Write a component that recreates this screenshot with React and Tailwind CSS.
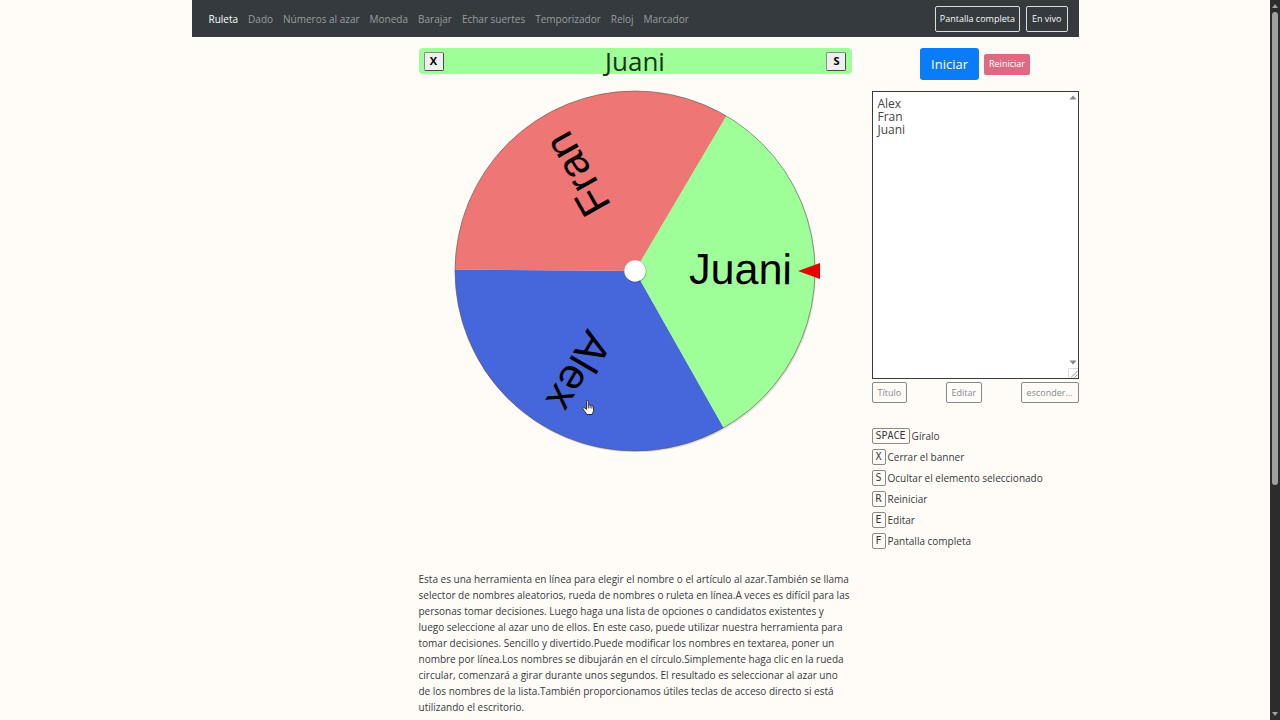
import React, { useState } from 'react';

const navLinks = [
  'Ruleta',
  'Dado',
  'Números al azar',
  'Moneda',
  'Barajar',
  'Echar suertes',
  'Temporizador',
  'Reloj',
  'Marcador',
];

const shortcuts = [
  { key: 'SPACE', label: 'Gíralo' },
  { key: 'X', label: 'Cerrar el banner' },
  { key: 'S', label: 'Ocultar el elemento seleccionado' },
  { key: 'R', label: 'Reiniciar' },
  { key: 'E', label: 'Editar' },
  { key: 'F', label: 'Pantalla completa' },
];

const sliceColors = ['#4666db', '#ee7776', '#9eff98'];

const CENTER = 185;
const MIDDLE = 181;
const RADIUS = 180;

// Point on the rim for an angle in degrees
const rim = (deg) => {
  const rad = (deg * Math.PI) / 180;
  return `${CENTER + RADIUS * Math.cos(rad)} ${MIDDLE + RADIUS * Math.sin(rad)}`;
};

const Navbar = () => (
  <nav className="flex items-center justify-between bg-[#343a3e] px-[11px] pt-[6px] pb-[5px]">
    <ul className="flex items-center gap-[10px] pl-[6px]">
      {navLinks.map((link, index) => (
        <li key={link}>
          <a href="#" className={index === 0 ? 'text-white' : 'text-[#9a9d9f]'}>
            {link}
          </a>
        </li>
      ))}
    </ul>
    <div className="flex gap-[6px] text-[9px] text-[#f8f9fa]">
      <button className="h-[26px] rounded-[2px] border border-[#dcdddd] px-1">Pantalla completa</button>
      <button className="h-[26px] rounded-[2px] border border-[#dcdddd] px-[5px]">En vivo</button>
    </div>
  </nav>
);

const BannerButton = ({ children, title }) => (
  <button
    title={title}
    className="h-[19px] w-5 rounded-[2px] border border-t-[#8a8a8a] border-r-[#4a4a4a] border-b-[#4a4a4a] border-l-[#8a8a8a] bg-[#efefef] text-[11px] leading-4 font-bold text-black"
  >
    {children}
  </button>
);

const Wheel = ({ names, rotation }) => {
  const step = 360 / names.length;

  return (
    <svg viewBox="0 0 370 362" className="mx-auto mt-4 w-[370px] cursor-pointer">
      <circle cx={CENTER + 1} cy={MIDDLE + 1.5} r={RADIUS} fill="#000" opacity="0.12" />
      {names.map((name, index) => {
        const start = rotation + step * index;
        return (
          <path
            key={name}
            d={`M${CENTER} ${MIDDLE} L${rim(start)} A${RADIUS} ${RADIUS} 0 0 1 ${rim(start + step)} Z`}
            fill={sliceColors[index % sliceColors.length]}
          />
        );
      })}
      <circle cx={CENTER} cy={MIDDLE} r={RADIUS} fill="none" stroke="#555" strokeWidth="0.6" />
      {names.map((name, index) => (
        <text
          key={name}
          x={CENTER + 157}
          y={MIDDLE + 12}
          textAnchor="end"
          fontSize="43"
          fontFamily="'Liberation Sans', Arial, sans-serif"
          transform={`rotate(${rotation + step * (index + 0.5)} ${CENTER} ${MIDDLE})`}
        >
          {name}
        </text>
      ))}
      <circle cx={CENTER + 0.5} cy={MIDDLE + 0.5} r="11" fill="#000" opacity="0.25" />
      <circle cx={CENTER} cy={MIDDLE} r="10.7" fill="#fff" />
      <path d="M348 181 L370 173 V189 Z" fill="#e60000" />

      {/* Hand pointer */}
      <path
        transform="translate(132 310)"
        d="M4.5 1.2 C4.5 0.2 6.3 0.2 6.3 1.2 V5.4 C6.5 4.6 8 4.7 8.1 5.7 C8.5 5 9.8 5.2 9.9 6.2 C10.4 5.7 11.5 6 11.5 7 V10 C11.5 12 10.6 12.6 10.3 14.5 H4.6 C4.3 12.8 2.8 11.6 1 9 C0.4 7.9 1.6 7.2 2.5 7.9 L4.5 9.5 Z M6.3 5.4 V8.4 M8.1 5.8 V8.4 M9.9 6.3 V8.6"
        fill="#fff"
        stroke="#111"
        strokeWidth="0.8"
        strokeLinejoin="round"
      />
    </svg>
  );
};

const OutlineButton = ({ children }) => (
  <button className="h-[21px] rounded-[2px] border border-[#858a8e] px-[5px] text-[9px] text-[#858a8e]">
    {children}
  </button>
);

const NameList = ({ text, onChange }) => (
  <div className="relative mt-[11px]">
    <textarea
      aria-label="Nombres"
      value={text}
      onChange={onChange}
      className="block h-[288px] w-full resize-none overflow-hidden border border-[#3a3a3a] bg-white px-[5px] py-[5px] text-[12px] leading-[13px] text-[#444] outline-none"
    />
    <svg viewBox="0 0 8 5" className="absolute top-1 right-[2px] w-2">
      <path d="M0.5 4.5 L4 0.5 L7.5 4.5 Z" fill="#868686" />
    </svg>
    <svg viewBox="0 0 8 5" className="absolute right-[2px] bottom-[14px] w-2">
      <path d="M0.5 0.5 L4 4.5 L7.5 0.5 Z" fill="#868686" />
    </svg>
    <svg viewBox="0 0 10 10" className="absolute right-px bottom-px w-[10px]">
      <path d="M0.5 10 V0.5 H10" fill="none" stroke="#ddd" />
      <path d="M3 9.5 L9.5 3 M6.5 9.5 L9.5 6.5" fill="none" stroke="#777" strokeWidth="0.8" />
    </svg>
  </div>
);

const Scrollbar = () => (
  <div className="flex h-full w-[10px] shrink-0 flex-col items-center bg-[#2b2c2b] py-1">
    <svg viewBox="0 0 6 4" className="w-[6px]">
      <path d="M0 4 L3 0 L6 4 Z" fill="#a0a0a0" />
    </svg>
    <div className="my-1 flex w-[6px] flex-1 flex-col">
      <div className="h-[68%] rounded-full bg-[#9f9f9f]" />
    </div>
    <svg viewBox="0 0 6 4" className="w-[6px]">
      <path d="M0 0 L3 4 L6 0 Z" fill="#a0a0a0" />
    </svg>
  </div>
);

const App = () => {
  const [text, setText] = useState('Alex\nFran\nJuani');
  const names = text.split('\n').filter((name) => name.trim());
  const winner = names[names.length - 1];

  return (
    <div className="flex h-screen bg-[#fffcf8] font-['Open_Sans',sans-serif] text-[10px] leading-4 text-[#343a40]">
      <main className="min-w-0 flex-1 overflow-hidden">
        <div className="mx-auto w-full max-w-[887px]">
          <Navbar />

          <div className="grid grid-cols-[207fr_433fr_207fr] gap-x-5 pt-[11px]">
            <section className="col-start-2">
              {/* Winner banner */}
              <div className="flex h-[26px] items-center justify-between rounded-[4px] bg-[#9eff98] px-[5px]">
                <BannerButton title="Cerrar el banner">X</BannerButton>
                <h1 className="text-[26px] leading-[26px] text-[#16351a]">{winner}</h1>
                <BannerButton title="Ocultar el elemento seleccionado">S</BannerButton>
              </div>
              <Wheel names={names} rotation={60.5} />
            </section>

            <section>
              <div className="flex items-center justify-center gap-[5px]">
                <button className="h-8 rounded-[3px] bg-[#0a7cfa] px-[11px] text-[13px] text-white">Iniciar</button>
                <button className="h-[21px] rounded-[2px] bg-[#dd6a82] px-[5px] text-[9px] text-white">
                  Reiniciar
                </button>
              </div>

              <NameList text={text} onChange={(e) => setText(e.target.value)} />

              <div className="mt-[3px] flex justify-between">
                <OutlineButton>Título</OutlineButton>
                <OutlineButton>Editar</OutlineButton>
                <OutlineButton>esconder...</OutlineButton>
              </div>

              <ul className="mt-[25px] space-y-[5px]">
                {shortcuts.map(({ key, label }) => (
                  <li key={key} className="flex items-center gap-[2px]">
                    <kbd className="h-4 rounded-[2px] border border-[#8a8a8a] px-[3px] font-['DejaVu_Sans_Mono',monospace] text-[10px] leading-[14px]">
                      {key}
                    </kbd>
                    <span>{label}</span>
                  </li>
                ))}
              </ul>
            </section>

            <p className="col-start-2 mt-[22px]">
              Esta es una herramienta en línea para elegir el nombre o el artículo al azar.También se llama selector
              de nombres aleatorios, rueda de nombres o ruleta en línea.A veces es difícil para las personas tomar
              decisiones. Luego haga una lista de opciones o candidatos existentes y luego seleccione al azar uno de
              ellos. En este caso, puede utilizar nuestra herramienta para tomar decisiones. Sencillo y
              divertido.Puede modificar los nombres en textarea, poner un nombre por línea.Los nombres se dibujarán en
              el círculo.Simplemente haga clic en la rueda circular, comenzará a girar durante unos segundos. El
              resultado es seleccionar al azar uno de los nombres de la lista.También proporcionamos útiles teclas de
              acceso directo si está utilizando el escritorio.
            </p>
          </div>
        </div>
      </main>
      <Scrollbar />
    </div>
  );
};

export default App;
